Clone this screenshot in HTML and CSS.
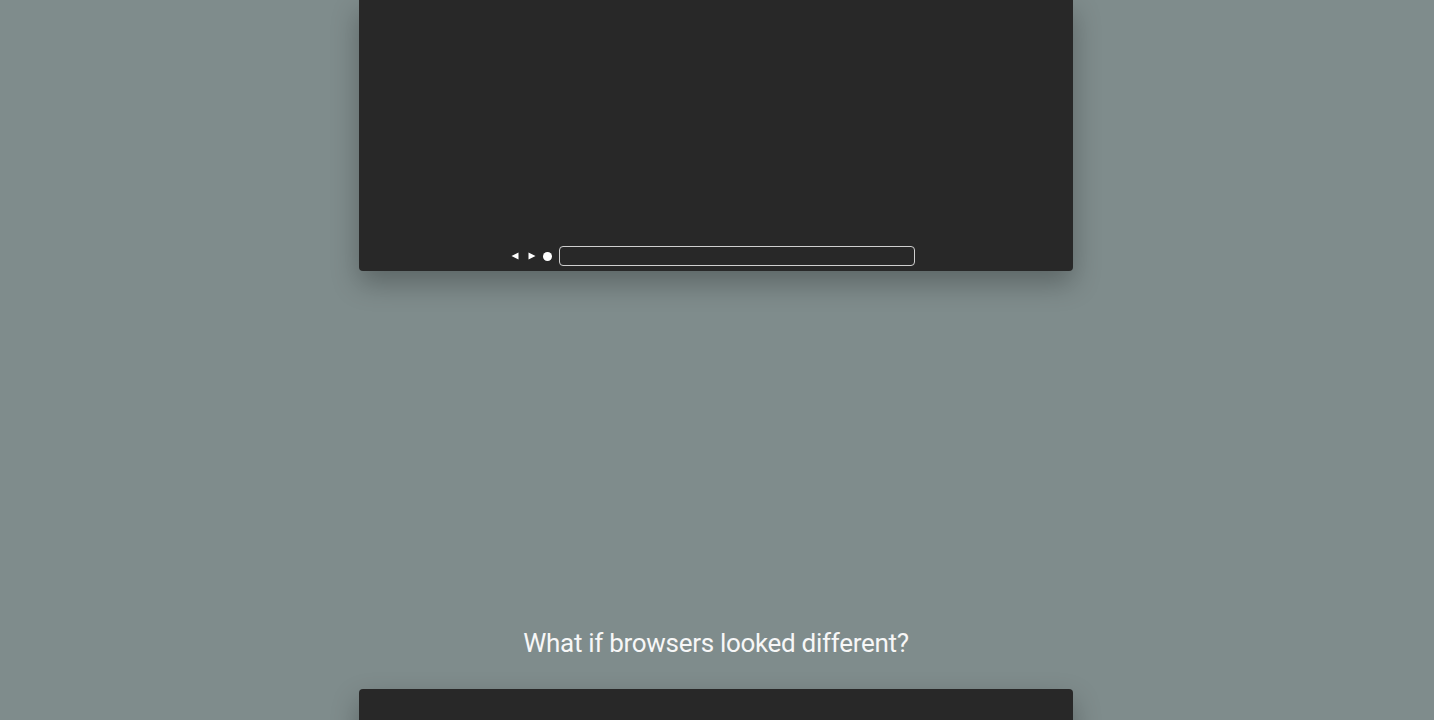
FILE: index.html
```html
<!DOCTYPE html>
<html>
<head>
<meta charset="utf-8">
<link rel="stylesheet" href="styles.css">
</head>
<body>
<main class="page">
  <section class="window window-top">
    <div class="viewport"></div>
    <div class="toolbar">
      <svg class="nav" width="8" height="8" viewBox="0 0 8 8"><polygon points="7.5,0.5 7.5,7.5 0.5,4" fill="#fff"/></svg>
      <svg class="nav nav-fwd" width="8" height="8" viewBox="0 0 8 8"><polygon points="0.5,0.5 0.5,7.5 7.5,4" fill="#fff"/></svg>
      <span class="dot"></span>
      <div class="url"></div>
    </div>
  </section>
  <h2 class="title">What if browsers looked different?</h2>
  <section class="window window-next"></section>
</main>
</body>
</html>
```
FILE: styles.css
```css
html, body {
  margin: 0;
  padding: 0;
  background: #7f8c8c;
  overflow: hidden;
}
.page {
  display: flex;
  flex-direction: column;
  align-items: center;
  padding-right: 2px;
  font-family: Roboto, "Liberation Sans", sans-serif;
}
.window {
  width: 714px;
  background: #282828;
  box-shadow: 0 12px 28px rgba(0, 0, 0, 0.28);
}
.window-top {
  height: 271px;
  border-radius: 0 0 4px 4px;
  display: flex;
  flex-direction: column;
}
.viewport {
  flex: 1;
}
.toolbar {
  display: flex;
  align-items: center;
  justify-content: center;
  height: 20px;
  padding: 0 7px 5px 0;
}
.nav {
  display: block;
  margin-right: 8px;
}
.nav-fwd {
  margin-left: 1px;
  margin-right: 7px;
}
.dot {
  width: 9px;
  height: 9px;
  border-radius: 50%;
  background: #fff;
  margin-right: 7px;
}
.url {
  width: 354px;
  height: 18px;
  border: 1px solid #cfcfcf;
  border-radius: 4px;
}
.title {
  margin: 355px 0 0 0;
  height: 63px;
  font-size: 26px;
  font-weight: 400;
  color: #f7f7f7;
  line-height: 34px;
  letter-spacing: -0.3px;
}
.window-next {
  height: 200px;
  border-radius: 4px 4px 0 0;
}
```
